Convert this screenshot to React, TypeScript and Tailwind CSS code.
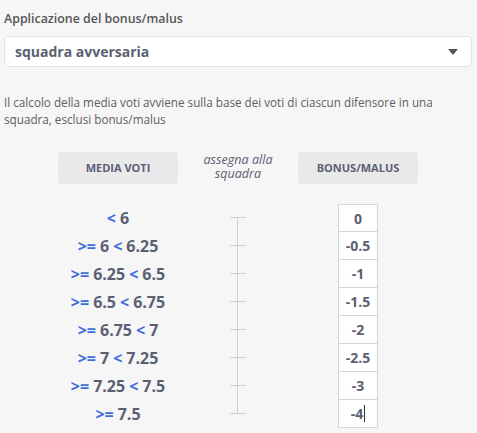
import { useState } from 'react';

const rows = [
  { op1: '<', a: '6', op2: '', b: '', value: '0' },
  { op1: '>=', a: '6', op2: '<', b: '6.25', value: '-0.5' },
  { op1: '>=', a: '6.25', op2: '<', b: '6.5', value: '-1' },
  { op1: '>=', a: '6.5', op2: '<', b: '6.75', value: '-1.5' },
  { op1: '>=', a: '6.75', op2: '<', b: '7', value: '-2' },
  { op1: '>=', a: '7', op2: '<', b: '7.25', value: '-2.5' },
  { op1: '>=', a: '7.25', op2: '<', b: '7.5', value: '-3' },
  { op1: '>=', a: '7.5', op2: '', b: '', value: '-4' },
];

export default function App() {
  const [target] = useState('squadra avversaria');

  return (
    <div
      className="min-h-[433px] w-[477px] bg-[#f6f6f6] px-[4px] pt-[10px] text-[#5b5f72]"
      style={{ fontFamily: '"Open Sans", sans-serif' }}
    >
      <div className="text-[12.4px] font-semibold leading-[18px] text-[#555]">Applicazione del bonus/malus</div>

      <div className="mt-[8px] flex h-[31px] w-[468px] items-center justify-between rounded-[4px] border border-[#e3e3e3] bg-white pl-[10px] pr-[13px]">
        <span className="text-[14px] font-bold">{target}</span>
        <svg width="10" height="6" viewBox="0 0 10 6">
          <path d="M0 0h10L5 6z" fill="#555" />
        </svg>
      </div>

      <p className="mt-[27px] text-[11.7px] leading-[17px] text-[#5e5e5e]">
        Il calcolo della media voti avviene sulla base dei voti di ciascun difensore in una squadra, esclusi bonus/malus
      </p>

      <div className="ml-[54px] mt-[24px] grid w-[360px] grid-cols-3">
        <div className="flex h-[32px] items-center justify-center rounded-[4px] bg-[#e9e9ea] text-[11px] font-bold">MEDIA VOTI</div>
        <div className="pt-[1px] text-center text-[12.6px] italic leading-[14px]">assegna alla<br />squadra</div>
        <div className="flex h-[32px] items-center justify-center rounded-[4px] bg-[#e9e9ea] text-[11px] font-bold">BONUS/MALUS</div>
      </div>

      <div className="ml-[54px] mt-[20px] w-[360px]">
        {rows.map((r, i) => (
          <div key={i} className="grid h-[28px] grid-cols-3">
            <div className="flex items-center justify-center gap-[4px] text-[16px] font-bold">
              <span className="text-[#3d6ce0]">{r.op1}</span>
              <span>{r.a}</span>
              {r.op2 && <span className="text-[#3d6ce0]">{r.op2}</span>}
              {r.b && <span>{r.b}</span>}
            </div>
            <div className="relative">
              <div
                className={
                  'absolute left-[59px] w-[1px] bg-[#cfcfcf] ' +
                  (i === 0 ? 'top-[13px] bottom-0' : i === rows.length - 1 ? 'top-0 h-[14px]' : 'top-0 bottom-0')
                }
              />
              <div className="absolute left-[52px] top-[13px] h-[1px] w-[16px] bg-[#cfcfcf]" />
            </div>
            <div className="flex justify-center">
              <div
                className={
                  'flex h-[28px] w-[40px] items-center justify-center border-x border-b border-[#d3d3db] bg-white text-[14px] font-bold ' +
                  (i === 0 ? 'border-t' : '')
                }
              >
                {r.value}
                {i === rows.length - 1 && <span className="ml-[1px] h-[17px] w-[1px] bg-[#333]" />}
              </div>
            </div>
          </div>
        ))}
      </div>
    </div>
  );
}
